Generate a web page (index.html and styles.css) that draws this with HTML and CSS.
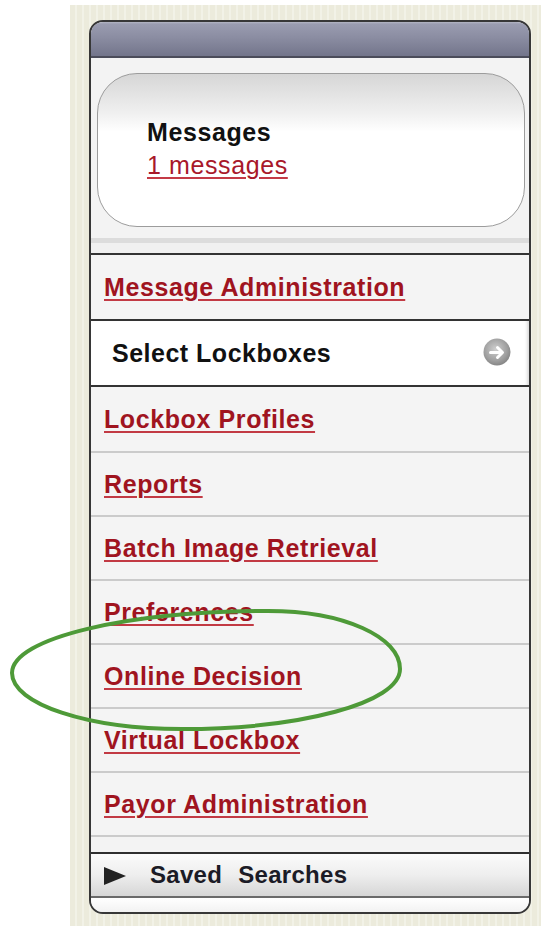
FILE: index.html
```html
<!DOCTYPE html>
<html lang="en">
<head>
<meta charset="utf-8">
<title>Lockbox Menu</title>
<link rel="stylesheet" href="styles.css">
</head>
<body>
<div class="backdrop">
  <div class="panel">
    <div class="panel-head"></div>

    <div class="msg-area">
      <div class="msg-box">
        <div class="msg-title">Messages</div>
        <a class="msg-link" href="#">1 messages</a>
      </div>
    </div>
    <div class="msg-rule"></div>

    <ul class="nav">
      <li class="nav-item tall dark"><a href="#">Message Administration</a></li>
      <li class="nav-item tall dark selector">
        <span class="selector-label">Select Lockboxes</span>
        <svg class="go" width="28" height="28" viewBox="0 0 28 28" aria-hidden="true">
          <defs>
            <radialGradient id="goFill" cx="45%" cy="40%" r="60%">
              <stop offset="0" stop-color="#cfcfcf"/>
              <stop offset="0.7" stop-color="#a0a0a0"/>
              <stop offset="1" stop-color="#868686"/>
            </radialGradient>
          </defs>
          <circle cx="14" cy="14" r="13.5" fill="url(#goFill)"/>
          <path d="M7.5 14.5 H19 M14.5 9.5 L19.5 14.5 L14.5 19.5" fill="none" stroke="#fff" stroke-width="3" stroke-linecap="round" stroke-linejoin="round"/>
        </svg>
      </li>
      <li class="nav-item tall dark"><a href="#">Lockbox Profiles</a></li>
      <li class="nav-item"><a href="#">Reports</a></li>
      <li class="nav-item"><a href="#">Batch Image Retrieval</a></li>
      <li class="nav-item"><a href="#">Preferences</a></li>
      <li class="nav-item"><a href="#">Online Decision</a></li>
      <li class="nav-item"><a href="#">Virtual Lockbox</a></li>
      <li class="nav-item last"><a href="#">Payor Administration</a></li>
    </ul>

    <div class="nav-tail"></div>

    <div class="saved">
      <svg class="saved-arrow" width="22" height="18" viewBox="0 0 22 18" aria-hidden="true">
        <polygon points="0,0 22,9 0,18" fill="#222"/>
      </svg>
      <span class="saved-label">Saved Searches</span>
    </div>
    <div class="panel-foot"></div>
  </div>
</div>

<svg class="annotation" width="541" height="926" viewBox="0 0 541 926" aria-hidden="true">
  <path d="M12 673 C12 638 128 611 268 611 C344 611 400 637 400 669 C400 703 300 729 182 729 C88 729 12 704 12 673 Z"
        fill="none" stroke="#4e9a38" stroke-width="4"/>
</svg>
</body>
</html>
```

FILE: styles.css
```css
html, body {
  margin: 0;
  padding: 0;
  background: #ffffff;
}

body {
  position: relative;
  width: 541px;
  height: 926px;
  overflow: hidden;
  font-family: "Liberation Sans", Arial, sans-serif;
}

/* striped beige page behind the menu */
.backdrop {
  margin: 5px 0 0 70px;
  height: 921px;
  box-sizing: border-box;
  padding: 15px 10px 0 19px;
  background:
    repeating-linear-gradient(90deg, #ecebdc 0 5px, #f2f2e7 5px 7px);
}

.panel {
  width: 442px;
  box-sizing: border-box;
  border: 2px solid #373737;
  border-radius: 14px;
  background: #f4f4f4;
  overflow: hidden;
}

.panel-head {
  height: 34px;
  border-bottom: 2px solid #4b4c5a;
  background: linear-gradient(#b4b6c4 0, #9a9cb0 2px, #8b8da2 45%, #73758b 100%);
}

/* messages card */
.msg-area {
  padding: 15px 4px 11px 6px;
  background: #f3f3f3;
}

.msg-box {
  height: 154px;
  box-sizing: border-box;
  border: 1.5px solid #9c9c9c;
  border-radius: 40px;
  padding: 42px 0 0 49px;
  background: linear-gradient(#d6d6d6 0, #efefef 25%, #ffffff 38%, #ffffff 100%);
}

.msg-title {
  font-size: 25px;
  font-weight: bold;
  letter-spacing: 0.6px;
  line-height: 33px;
  color: #111;
}

.msg-link {
  display: inline-block;
  font-size: 25px;
  letter-spacing: 0.6px;
  line-height: 33px;
  color: #a8182a;
  text-decoration: underline;
  text-decoration-thickness: 2px;
  text-underline-offset: 3px;
  text-decoration-color: #c43a46;
}

.msg-rule {
  height: 5px;
  background: #dcdcdc;
  border-bottom: 10px solid #f0f0f0;
}

/* menu rows */
.nav {
  list-style: none;
  margin: 0;
  padding: 0;
}

.nav-item {
  display: flex;
  align-items: center;
  height: 62px;
  padding: 0 18px 0 13px;
  border-top: 2px solid #cbcbcb;
  background: #f4f4f4;
}

.nav-item.tall {
  height: 64px;
}

.nav-item.dark {
  border-top-color: #333;
}

.nav-item.last {
  border-bottom: 2px solid #cbcbcb;
}

.nav-item a {
  font-size: 25px;
  font-weight: bold;
  letter-spacing: 0.6px;
  color: #a0141f;
  text-decoration: underline;
  text-decoration-thickness: 2px;
  text-underline-offset: 3px;
  text-decoration-color: #c23a44;
}

.selector {
  justify-content: space-between;
  padding-left: 21px;
  background: #ffffff;
  box-shadow: inset -4px 0 3px -2px #dcdcdc;
}

.selector-label {
  font-size: 25px;
  font-weight: bold;
  letter-spacing: 0.5px;
  color: #111;
}

.go {
  display: block;
  margin-top: -3px;
}

.nav-tail {
  height: 15px;
  background: #f3f3f3;
}

/* saved searches bar */
.saved {
  display: flex;
  align-items: center;
  height: 42px;
  padding-left: 13px;
  border-top: 2px solid #2f2f2f;
  border-bottom: 2px solid #6a6a6a;
  background: linear-gradient(#fbfbfb 0, #eeeeee 50%, #d6d6d6 100%);
}

.saved-arrow {
  display: block;
  margin-top: 2px;
}

.saved-label {
  margin-left: 24px;
  font-size: 24px;
  font-weight: bold;
  letter-spacing: 0.3px;
  word-spacing: 9px;
  color: #1b1b26;
}

.panel-foot {
  height: 14px;
  background: linear-gradient(#ffffff, #f2f2f2);
}

/* hand-drawn highlight ring on top of the menu */
.annotation {
  position: absolute;
  left: 0;
  top: 0;
  pointer-events: none;
}
```
